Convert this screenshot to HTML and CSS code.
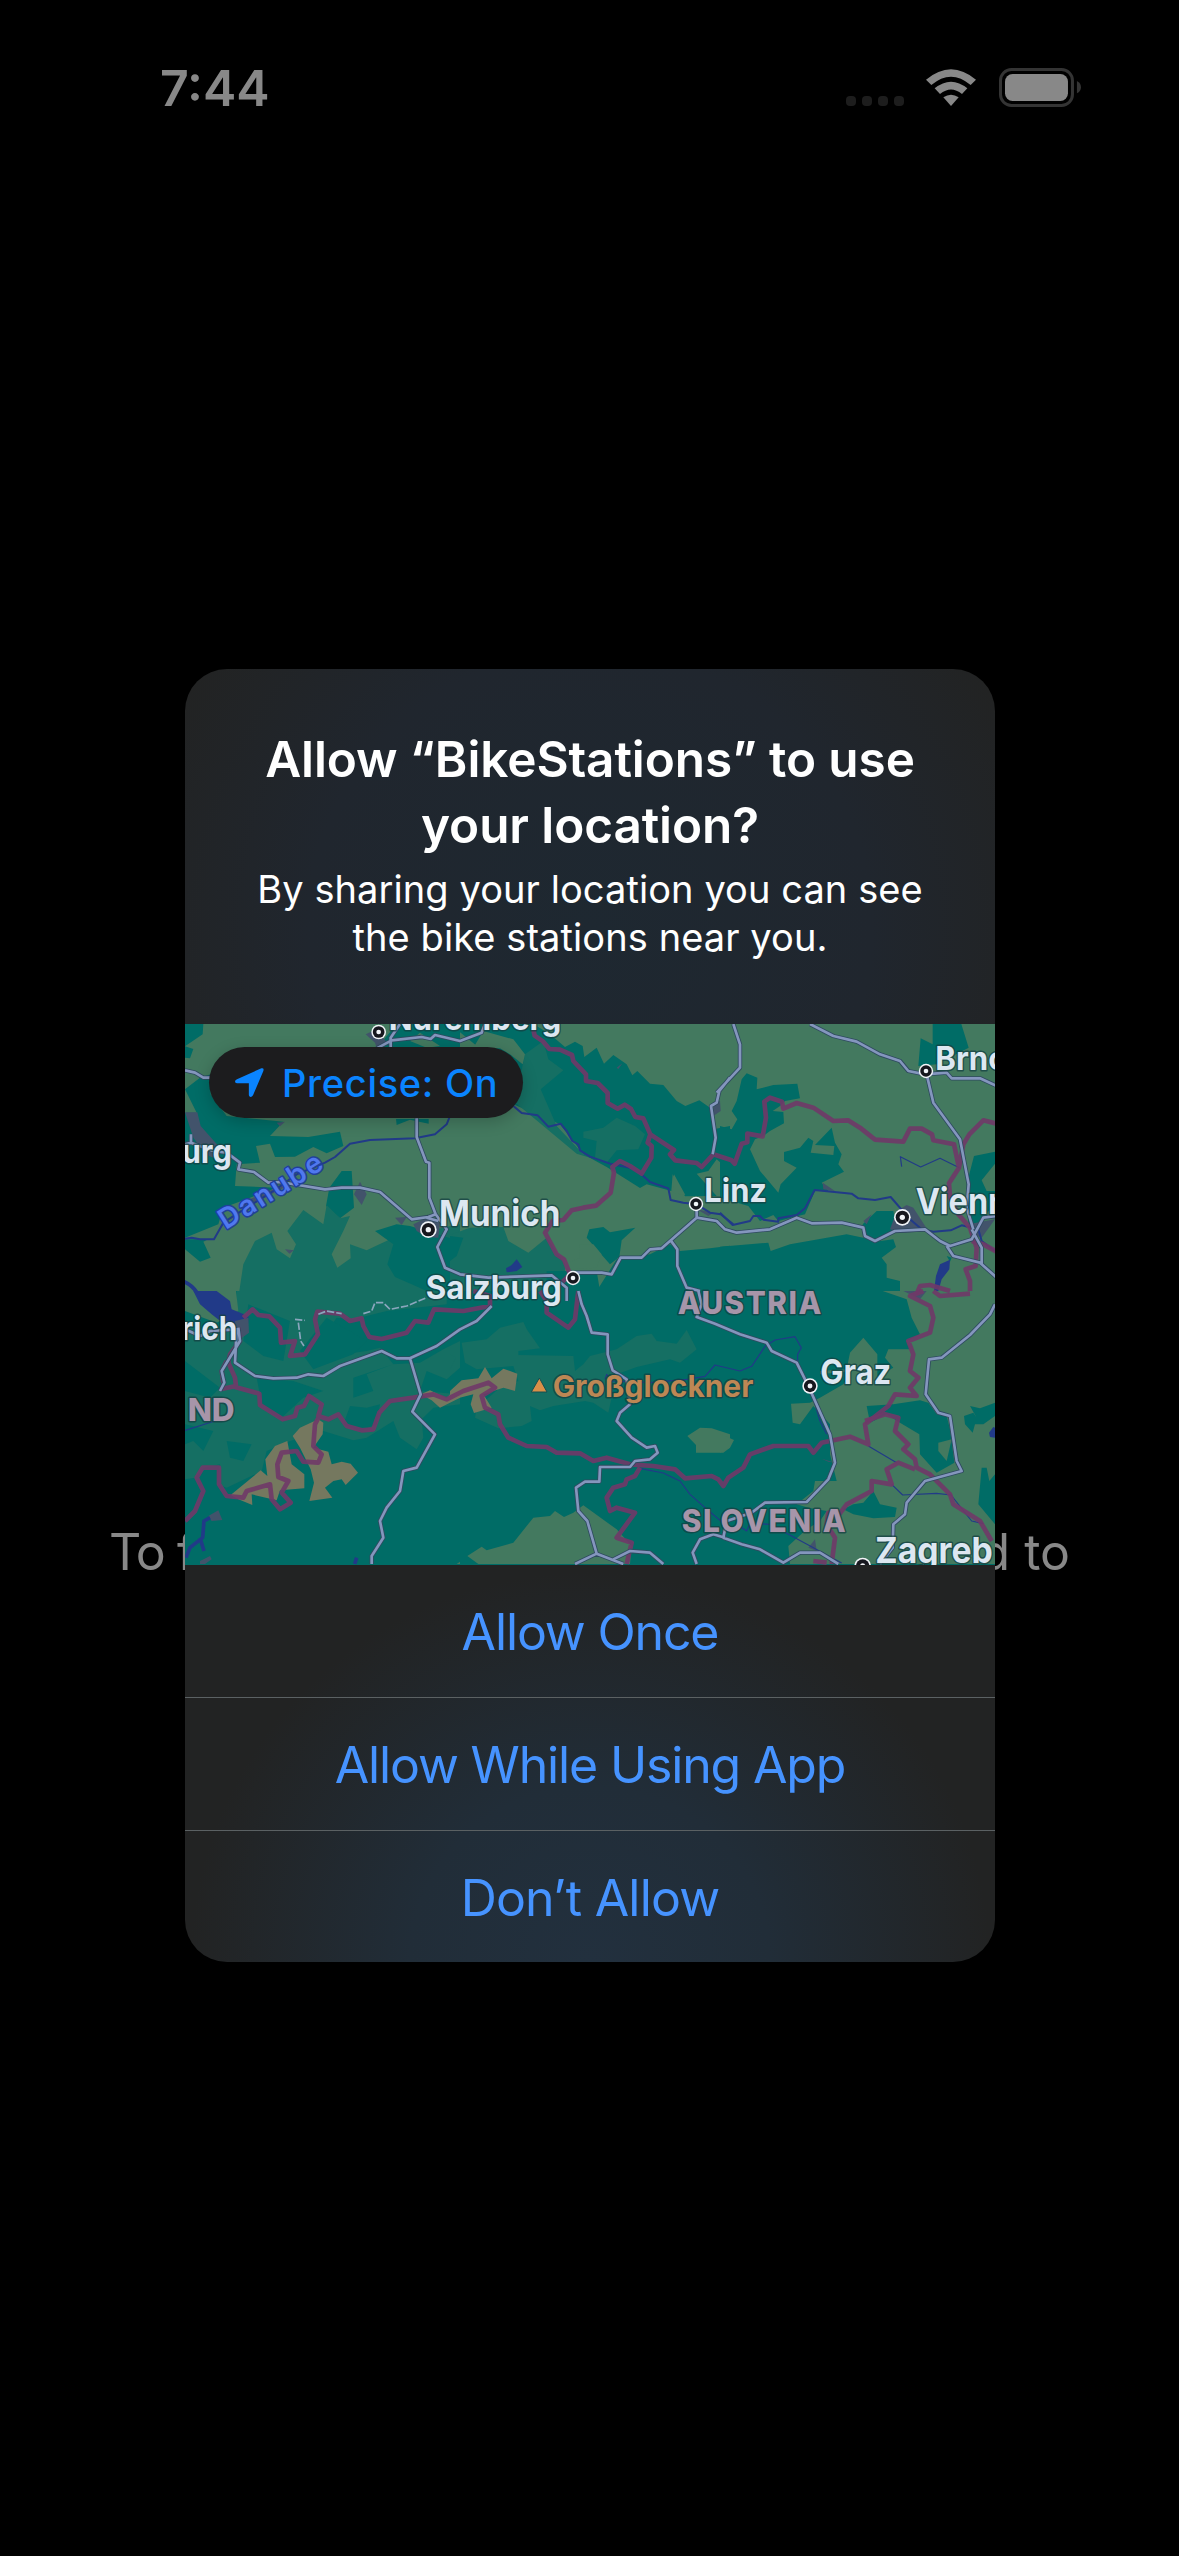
FILE: index.html
```html
<!DOCTYPE html>
<html lang="en">
<head>
<meta charset="utf-8">
<title>BikeStations</title>
<link rel="stylesheet" href="styles.css">
</head>
<body>
<div class="screen">
  <header class="status">
    <time class="clock">7:44</time>
    <div class="indicators">
      <div class="dots"><i></i><i></i><i></i><i></i></div>
      <svg class="wifi" viewBox="0 0 150 111">
        <path d="M0 32Q75 -31 150 32L134 48Q75 -2 16 48Z"/>
        <path d="M26 58Q75 18 124 58L108 75Q75 48 42 75Z"/>
        <path d="M52 85Q75 69 98 85L75 111Z"/>
      </svg>
      <svg class="battery" viewBox="0 0 247 117">
        <rect class="shell" x="4.500" y="4.500" width="216" height="108" rx="33"/>
        <rect class="charge" x="18" y="18" width="189" height="81" rx="23"/>
        <path class="nub" d="M234 39q12 6 12 18.500t-12 18.500z"/>
      </svg>
    </div>
  </header>

  <main class="stage">
    <p class="behind"><span class="start">To f</span><span>d to</span></p>
    <section class="dialog">
      <div class="intro">
        <h1>Allow “BikeStations” to use<br>your location?</h1>
        <p>By sharing your location you can see<br>the bike stations near you.</p>
      </div>

      <div class="map">
        <svg class="canvas" viewBox="0 0 2430 1623" preserveAspectRatio="none">
          <defs>
            <g id="city"><circle r="25" class="c1"/><circle r="20" class="c2"/><circle r="8" class="c1"/></g>
          </defs>
          <rect class="green" width="2430" height="801"/>
          <rect class="teal" y="801" width="2430" height="822"/>

          <!-- land cover -->
          <g transform="translate(-15 -39)">
            <path class="teal" d="M15 39H70L68 70L15 106ZM15 106L40 114L30 142L15 140ZM15 235L60 200L92 190V250L140 315L310 332L270 375L385 378L480 362L490 405L440 427L400 408L345 437L285 438L270 398L228 405L240 455L170 460L165 525L290 530L130 590L115 640L15 680V305L50 305ZM15 685H85L70 692L92 740L60 752L15 715ZM485 480L515 480L522 590L480 622L438 585L448 530ZM650 39H840V230L590 110L610 88ZM648 324H746V338L690 326L650 342Z"/>
            <path class="mid" d="M178 840L190 760L225 690L275 665L290 715L330 742L348 700L322 660L370 597L430 640L440 582L480 622L510 615L490 660L455 730L472 770L512 742L510 700L560 718L640 680L840 640V840Z"/>
            <path class="teal" d="M585 660L650 640L690 645L840 690V840H740L700 822L645 798L622 760L640 700Z"/>
            <path class="urban" d="M15 304H52L62 345L120 410L100 440L75 430L40 380ZM557 70L590 55L625 100L590 110L585 95ZM522 550L540 512L560 550L545 582ZM645 620L680 618L665 642ZM700 640L740 620L780 635L775 680L740 678L710 660ZM290 335L315 332L300 346ZM315 715L342 718L328 728ZM175 580L330 512L320 525L210 585Z"/>
            <path class="green" d="M690 90L720 65L780 105L740 110Z"/>
          </g>
          <g transform="translate(795 -39)">
            <path class="teal" d="M0 39H250L300 70L345 108L375 92L398 105L403 138L440 110L462 158L490 132L530 160L547 193L562 180L600 218L640 222L680 270L706 285L748 268L780 290L790 355L840 345V480L800 445L775 480L740 488L800 555L705 556L668 490L664 540L590 520L570 531L470 468L400 430L330 340L190 280L220 220ZM410 680L418 655L460 648L480 664L556 650L515 688L508 738L480 760L440 715ZM440 840L500 745L600 730L660 700L690 720L780 712L840 704V840Z"/>
            <path class="mid" d="M225 130L280 90L295 145L340 178L272 235L320 345L400 430L435 440L440 390L400 380L400 362L460 350L500 320L555 345L585 370L565 415L500 418L470 455L380 428L190 270L210 200Z"/>
            <path class="green" d="M70 110L100 60L190 85L225 130L218 160L180 130L150 112ZM672 490L706 552L668 545ZM345 760L390 740L388 700L430 700L455 730L440 770L365 775Z"/>
            <path class="mid" d="M0 672L60 650L160 648L175 690L235 725L290 680L345 760V840H0Z"/>
            <path class="teal" d="M0 675L40 680L20 735L0 750ZM290 780L440 780L450 840H290Z"/>
            <path class="water" d="M168 772L185 762L200 745L217 768L200 780L170 784Z"/>
            <path class="urban" d="M790 275L810 270L812 300L790 315ZM740 595L790 605L775 615ZM500 170L517 157L505 174Z"/>
          </g>
          <g transform="translate(1605 -39)">
            <path class="teal" d="M638 39H724L746 110L650 160L595 165L602 82L638 100ZM65 205L80 187L112 200L110 235L160 222L232 218L240 262L195 270L180 285L158 300L190 303L192 337L150 360L130 375L105 385L90 415L120 480L175 545L182 520L230 470L192 450V423L240 410L265 380L280 390L272 425L340 432L343 405L285 402L335 350L345 395L365 430L355 460L372 482L305 515L325 540L285 540L255 610L175 630L160 612L120 630L85 585L0 560V345L35 355L52 325L35 300L50 270ZM762 435L825 422V480L785 508L800 540L825 540V580L770 640L745 640L740 520ZM428 640L470 600L520 600L530 650L465 692L435 670ZM0 707L145 695L152 720L210 700L380 670L430 680L465 692L520 685L528 708L485 740L500 760V800L540 810V840H0ZM680 735L695 740L690 752Z"/>
            <path class="green" d="M785 508L825 458V500Z"/>
            <path class="urban" d="M510 655L530 600L560 582L580 590L625 660L550 665ZM308 515L345 540L310 535ZM745 640L825 625L785 680L760 670ZM430 630L455 610L440 640Z"/>
            <path class="water" d="M660 760L690 746L688 775L665 805L655 840H642L648 795Z"/>
          </g>
          <g transform="translate(-15 801)">
            <path class="mid" d="M170 0H800V40L620 60L520 85L470 80L420 150L420 200L560 180L600 170L640 220L720 215L790 175L840 150V230L800 265L740 240L720 300L840 310V340L760 350L725 385L730 440L710 475L660 440L640 390L560 440L520 448L430 420L330 450L260 480L245 540L140 590L110 580L120 520L70 530L45 560L15 565V110L170 115Z"/>
            <path class="teal" d="M205 40L330 90L310 210L250 195L190 150ZM440 80L560 150L520 190L400 235L360 180ZM15 210L120 290L90 320L15 300ZM230 260L340 270L430 300L370 320L300 385L245 340ZM520 260L640 220L560 250L580 300L520 320ZM15 400L100 420L70 480L40 450L15 460ZM140 450L215 460L190 510L150 500ZM510 345L560 350L600 340L590 400L540 420L490 400Z"/>
            <path class="green" d="M15 0H168L175 60L110 95L15 60ZM830 819L840 812V819Z"/>
            <path class="tan" d="M338 435L360 410L415 385L430 395L428 430L400 470L445 482L455 520L485 512L512 518L534 545L497 582L485 565L460 570L435 590L457 620L388 630L402 575L392 535L360 470ZM152 612L242 538L262 555L256 505L285 465L322 450L335 520L373 550V592L300 598L290 628L215 610L217 642L175 625ZM722 310L750 298L800 322L840 275V320L780 350L755 328Z"/>
            <path class="water" d="M40 0H110L150 30L155 55L205 75V95L170 110L140 105L95 70L60 40Z"/>
            <path class="urban" d="M165 90L205 80L207 125L180 145L165 120ZM85 675L115 658L127 687L95 690ZM60 810L90 795L95 805L75 819H60Z"/>
          </g>
          <g transform="translate(795 801)">
            <path class="mid" d="M35 155L110 145L150 110L220 93L230 115L270 172L205 180L205 192L370 195L375 240L400 220L420 195L500 175L560 135L605 128L620 150L680 158L710 117L740 175L690 215L660 205L560 228L500 250L475 365L430 335L405 330L310 345L270 358L240 345L245 390L215 405L145 412L75 380L80 350L150 290L205 270L190 225L80 235L45 215ZM0 190L18 200L0 235Z"/>
            <path class="tan" d="M0 300L35 268L85 262L105 228L125 262L160 233L202 248L195 300L160 290L100 310L125 350L72 366L62 340L70 310L0 328Z"/>
            <path class="green" d="M52 795L95 767L110 778L190 755L250 680L300 675L315 660L342 678L370 665L400 643L500 715L545 765L540 819H85ZM712 435L750 410L785 412L840 430V470L820 485H738V462Z"/>
          </g>
          <g transform="translate(1605 801)">
            <path class="green" d="M488 0H825V819H210L205 765L260 715L300 690L320 660L265 650L230 640L280 600L285 570L350 570L330 490L330 400L280 345L240 400L218 395L213 338L270 335L300 320L370 280L395 240L300 250L300 240L380 235L390 185L430 140L472 190V255L520 230L495 200L505 175L570 175L560 150L600 130L575 80L560 25ZM0 428L42 447L30 470L0 485Z"/>
            <path class="teal" d="M440 345L520 340L600 328L625 335L650 370L680 375L690 415L703 515L650 545L600 490L598 430L540 395L500 370L450 395ZM732 375L760 365L770 380L750 345L780 352L825 335V375L790 400L765 400L758 425L735 400ZM370 655L400 640L430 635L460 600L480 640L530 650L525 678L460 682L400 670ZM785 530L800 530L808 570L825 550V700L775 640Z"/>
            <path class="green" d="M655 455L695 445L680 510L655 480Z"/>
            <path class="urban" d="M550 0H620L600 25ZM305 503L345 515L325 512ZM265 770L285 745L290 780Z"/>
            <path class="water" d="M807 425L820 408L825 410V440L810 438Z"/>
          </g>

          <!-- rivers -->
          <g class="river">
            <path transform="translate(-15 -39)" d="M15 683L35 680L60 685H102L130 635L200 590L280 540L350 490L435 455L465 438L510 398L570 387L705 382L765 370L800 340L810 315"/>
            <path class="wide" transform="translate(-15 -39)" d="M12 812Q36 822 52 846"/>
            <path transform="translate(795 -39)" d="M190 285L215 306L263 313L295 347L332 338L350 360L367 390L385 400L390 418L420 437L480 458L540 470L572 488L600 513L655 532L662 567L700 575L740 580L780 605L812 610L850 640"/>
            <path transform="translate(1605 -39)" d="M0 605L38 642L90 630L100 615H120L130 626L175 632V622L230 612L255 592L284 537L395 548L415 562L465 567L512 558L570 625L605 655L640 662L692 658L725 643L775 655L785 690L825 720"/>
            <path class="thin" transform="translate(1605 -39)" d="M545 467L541 437L602 468L660 442L718 470"/>
            <path class="wide" transform="translate(-15 801)" d="M90 680L72 690L68 740L30 770L18 800M60 740L72 780M530 800L524 819"/>
            <path class="thin" transform="translate(-15 801)" d="M15 418L105 390"/>
            <path class="thin" transform="translate(795 801)" d="M465 265L470 250L485 270L600 275L710 265L765 256L795 222L870 240L905 226L945 166L975 147L1035 137L1054 170L1043 190V220M568 532L640 546L690 570L720 610L765 650L830 705"/>
            <path class="thin" transform="translate(1605 801)" d="M270 290L300 390L320 430M445 465L530 515M515 580L548 612L650 607L693 612L755 690L790 698M50 700L80 720L90 697L150 700L365 816"/>
          </g>

          <!-- borders -->
          <g class="border">
            <g transform="translate(795 -39)">
              <path d="M250 55L254 74L280 92L298 114L330 116L366 132L370 150L408 190V210L443 216L473 246V276L503 293L524 281L543 294L556 318L580 322L601 370L672 417L660 430L676 448L740 456L755 468L790 430L845 448L854 458L875 398L892 394V368L938 376L948 320L943 272L960 260L996 272L1000 293L1040 276L1090 290L1150 330L1194 328L1230 350L1275 386L1360 392L1380 353L1415 353L1446 370L1450 388L1512 400L1527 470L1497 517L1500 560L1525 610L1560 650L1580 710L1577 765L1547 775L1560 810V840M601 370L593 395L605 405L604 440L575 488L540 465L510 450L487 468L492 485L482 545L438 584L400 590L365 598L340 627L308 630L285 665L320 730L342 745L360 790L330 820M1527 470L1540 400L1558 370L1600 328L1640 338"/>
              <path d="M1565 690L1600 700L1640 722M1400 850L1410 825L1440 822L1500 840"/>
            </g>
            <g transform="translate(-15 801)">
              <path d="M190 80L218 55L235 72L268 76L300 110L303 155L345 150L330 195L375 190L414 130L405 85L412 62L480 68L510 90L545 82L550 105L568 138L605 144L680 125L705 90L745 95L762 55L850 60L930 45V15L880 0M175 110L180 150L150 190L145 215L165 260L168 285L120 295M140 210L125 240L130 275M165 288L238 308L240 342L308 385L345 375L352 350L372 345L387 315L425 340L415 375L445 385L475 370L500 405L545 418L580 415L598 365L630 330L700 320L760 310L800 325L850 300L925 275L945 290L905 315L915 350L955 370L960 400L985 440L1040 465L1100 468L1130 485L1200 487L1240 510L1280 500L1350 520L1420 525L1485 535L1515 562L1595 555L1615 565L1630 585L1645 560L1690 530L1710 490L1780 465L1885 465L1900 485L1925 455L2010 437L2065 460L2055 400L2125 345L2145 310L2210 315L2190 290L2215 260L2190 240L2200 190L2185 150L2250 125L2260 80L2250 45L2190 15L2230 0M418 375L405 400L400 465L425 490L415 515L370 512L350 480L305 485L292 520L295 558L325 570L305 605L332 635L300 655L275 625L270 580L200 600L190 620L140 615L117 580V530H68L50 560L70 600L45 660L15 690M1195 0L1185 85L1165 110L1100 65V30L1080 0"/>
              <path d="M1380 530L1365 555L1340 565L1335 580L1300 590L1280 620L1290 660L1310 650L1365 665L1310 740L1355 755L1340 819M2055 390L2115 370L2155 380L2145 420L2185 460L2170 475L2205 505L2210 530L2250 550L2310 610L2320 640L2400 690L2435 750M2205 535L2155 515L2120 535L2135 580L2075 570L2075 600L2000 640L1970 680L1965 660L1945 665L1940 700L1965 740L1955 819M1900 810L1940 815M2260 0L2280 15L2370 8"/>
            </g>
          </g>

          <!-- roads, drawn as a dark casing with a lighter core -->
          <defs>
            <g id="roads">
              <path transform="translate(-15 -39)" d="M15 178L45 185L70 200H92M590 112L635 88L725 78L752 84L765 72L840 90L905 65L915 39M632 110V80L660 39M710 322V378L738 452L748 455V560L767 610L745 618L695 625L600 543L540 530H485L435 535L300 513L265 515L222 483L175 475L180 455L140 425L100 420L33 395L15 400M33 395V370M767 610L800 655L772 708L795 770L840 790L925 800L1115 793L1160 830L1160 870M775 630L740 620"/>
              <path transform="translate(795 -39)" d="M363 785H455L485 790L512 740H575L600 715L635 712L740 620L800 630L825 655L860 665L960 655L1040 620L1085 637L1175 635L1240 650L1245 675L1275 690L1335 660L1425 655L1470 690L1500 705L1565 685L1600 620L1640 615M740 580V620M662 688L682 715V765L710 830L750 840M1490 705L1510 735L1590 755L1640 800M1565 655L1595 710V760M840 200L808 240L800 275L783 285L797 380L788 430M850 39L870 100V170L800 245M1080 39L1150 75L1220 92L1290 130L1350 150L1375 180L1425 190L1490 185L1505 202H1590L1640 225M1430 190L1450 275L1530 385L1556 520L1550 590L1570 655"/>
              <path transform="translate(-15 801)" d="M120 300L133 275L125 240L180 150L175 110M15 115L60 135L90 120L170 115L165 215L225 255L280 262L350 260L385 250L430 255L480 225L605 180L650 202H690L770 165L840 115L890 90L935 45M690 202L722 310L697 362L765 430L710 530L670 540L660 600L620 650L600 690L610 740L575 795V819"/>
              <path transform="translate(795 801)" d="M385 0L395 40L410 75L425 125L473 130V190L488 238L530 265L540 340L510 365L500 390L545 440L590 470L615 465L623 485L600 505L555 510L540 528L450 528L448 572H405L378 590L385 660L412 690L440 788L375 819M440 788L520 819M490 805L540 780L600 785L640 819M745 0L755 40L740 78L795 98L870 130L950 155L965 180L1040 215L1055 245L1075 285L1140 430L1155 515L1135 565L1070 633L945 635L905 665L830 690L820 740L875 760L930 775L1000 815L1050 785H1110L1165 819M740 819L728 785L750 745L790 730L825 740"/>
              <path transform="translate(1605 801)" d="M825 40L810 70L750 132L665 200L627 205L617 310L655 365L690 375L710 510L725 540L615 570L560 635L555 670L520 700L518 770L480 819"/>
            </g>
          </defs>
          <use href="#roads" class="casing"/>
          <use href="#roads" class="core"/>
          <path class="dashed" transform="translate(-15 801)" d="M345 85L375 88M355 95L362 150L372 165M415 70L440 60L485 68M550 68L575 60L585 35L610 35L630 55L680 45L740 20"/>

          <use href="#city" transform="translate(581 24) scale(.88)"/>
          <use href="#city" x="730" y="617"/>
          <use href="#city" transform="translate(1533 540) scale(.86)"/>
          <use href="#city" transform="translate(1164 762) scale(.86)"/>
          <use href="#city" transform="translate(2223 141) scale(.86)"/>
          <use href="#city" x="2152" y="580"/>
          <use href="#city" transform="translate(1875 1086) scale(.92)"/>
          <use href="#city" x="2033" y="1626"/>

          <g class="label">
            <text x="611" y="17" font-size="101" textLength="518" lengthAdjust="spacingAndGlyphs">Nuremberg</text>
            <text x="762" y="606" font-size="108" textLength="364" lengthAdjust="spacingAndGlyphs">Munich</text>
            <text x="1558" y="535" font-size="100" textLength="188" lengthAdjust="spacingAndGlyphs">Linz</text>
            <text x="2192" y="570" font-size="108" textLength="334" lengthAdjust="spacingAndGlyphs">Vienna</text>
            <text x="2251" y="137" font-size="100" textLength="216" lengthAdjust="spacingAndGlyphs">Brno</text>
            <text x="722" y="824" font-size="97" textLength="408" lengthAdjust="spacingAndGlyphs">Salzburg</text>
            <text x="1906" y="1080" font-size="101" textLength="213" lengthAdjust="spacingAndGlyphs">Graz</text>
            <text x="2071" y="1617" font-size="107" textLength="352" lengthAdjust="spacingAndGlyphs">Zagreb</text>
            <text x="-10" y="417" font-size="100" textLength="151" lengthAdjust="spacingAndGlyphs">urg</text>
            <text x="-12" y="948" font-size="97" textLength="169" lengthAdjust="spacingAndGlyphs">rich</text>
          </g>
          <g class="label country">
            <text x="8" y="1190" font-size="93" textLength="141" lengthAdjust="spacingAndGlyphs">ND</text>
            <text x="1478" y="869" font-size="94" textLength="436" letter-spacing="5" lengthAdjust="spacingAndGlyphs">AUSTRIA</text>
            <text x="1490" y="1523" font-size="94" textLength="497" letter-spacing="5" lengthAdjust="spacingAndGlyphs">SLOVENIA</text>
          </g>
          <path class="peak-mark" d="M1063 1062L1086 1104H1039Z"/>
          <text class="label peak" x="1103" y="1119" font-size="91" textLength="602" lengthAdjust="spacingAndGlyphs">Großglockner</text>
          <text class="label stream" transform="translate(122 618) rotate(-32)" font-size="84" textLength="352">Danube</text>
        </svg>
        <div class="precise">
          <svg viewBox="0 0 88 88"><path d="M80 1Q89 -1 86 9L55 82Q52 88 47 88Q42 87 42 82V46H6Q0 46 0 41Q0 37 6 34Z"/></svg>
          <span>Precise: On</span>
        </div>
      </div>

      <div class="actions">
        <button>Allow Once</button>
        <button>Allow While Using App</button>
        <button class="deny">Don’t Allow</button>
      </div>
    </section>
  </main>
</div>
</body>
</html>
```
FILE: styles.css
```css
* { box-sizing: border-box; }
body { margin: 0; background: #000; font-family: Inter, "Liberation Sans", sans-serif; }
.screen { width: 1179px; height: 2556px; overflow: hidden; background: #000; display: flex; flex-direction: column; }

.status { height: 669px; padding: 58px 98px 0 160px; display: flex; justify-content: space-between; align-items: flex-start; color: #888; }
.clock { font-size: 50px; line-height: 60px; font-weight: 600; letter-spacing: 0; }
.indicators { display: flex; align-items: flex-start; padding-top: 10px; }
.dots { display: flex; gap: 6px; margin: 28px 22px 0 0; }
.dots i { width: 10px; height: 10px; border-radius: 4px; background: #1d1d1d; }
.wifi { width: 50px; height: 37px; margin: 1px 23px 0 0; fill: #888; }
.battery { width: 82.300px; height: 39px; }
.shell { fill: none; stroke: #343434; stroke-width: 9; }
.charge { fill: #888; }
.nub { fill: #343434; }

.stage { position: relative; display: flex; justify-content: center; }
.behind { position: absolute; left: 109px; right: 109px; top: 853px; margin: 0; display: flex; justify-content: space-between; color: #888; font-size: 50px; line-height: 60px; }
.start { letter-spacing: -1.500px; }

.dialog {
  position: relative; left: .5px; width: 810px; height: 1293px; border-radius: 42px; overflow: hidden;
  display: flex; flex-direction: column; color: #fff;
  background:
    radial-gradient(ellipse 400px 390px at 50% 100%, #22303e 0%, #212d38 45%, rgba(34, 34, 35, 0) 100%),
    radial-gradient(ellipse 470px 460px at 50% 20%, #1e2831 0%, #20262e 60%, rgba(34, 34, 34, 0) 100%),
    #222323;
}
.intro { height: 355px; padding-top: 57px; text-align: center; white-space: nowrap; }
.intro h1 { margin: 0; font-size: 49.500px; line-height: 66px; font-weight: 600; letter-spacing: -.1px; }
.intro p { margin: 7px 0 0; font-size: 38px; line-height: 48px; letter-spacing: .08px; }

.map { position: relative; height: 541px; border-bottom: 1px solid #5b6462; }
.canvas { display: block; width: 810px; height: 541px; }
.green { fill: #43795f; }
.teal { fill: #006c66; }
.mid { fill: #156f63; }
.tan { fill: #75785f; }
.urban { fill: #42536b; }
.water { fill: #213a88; }
.river { fill: none; stroke: #213a88; stroke-width: 6; stroke-linejoin: round; }
.river .thin { stroke-width: 3.500; }
.river .wide { stroke-width: 11; }
.border { fill: none; stroke: #703868; stroke-opacity: .9; stroke-width: 14; stroke-linejoin: round; }
.casing, .core, .dashed { fill: none; stroke-linejoin: round; }
.casing { stroke: #2f4a60; stroke-width: 13; }
.core { stroke: #8496bd; stroke-width: 8; }
.dashed { stroke: #8aa6bd; stroke-width: 5; stroke-dasharray: 22 6; }
.c1 { fill: #f1f4f8; }
.c2 { fill: #16171e; }
.label { fill: #dde7f1; font-weight: 700; paint-order: stroke; stroke: rgba(20, 64, 66, .75); stroke-width: 9; stroke-linejoin: round; }
.country { fill: #a795a9; font-weight: 800; }
.peak { fill: #bd8754; }
.peak-mark { fill: #d88f48; stroke: #154f50; stroke-width: 3; }
.stream { fill: #5078ee; stroke: #21409a; font-weight: 600; }

.precise {
  position: absolute; left: 24px; top: 23px; width: 314px; height: 71px; border-radius: 36px; padding-left: 26px;
  display: flex; align-items: center; gap: 18px; background: #1c1c1e; color: #0a84ff;
  font-size: 38px; font-weight: 500; letter-spacing: .7px; white-space: nowrap; box-shadow: 0 4px 16px rgba(0, 0, 0, .2);
}
.precise svg { width: 29px; height: 29px; fill: #0a84ff; }

.actions { display: flex; flex-direction: column; }
.actions button { height: 133px; padding: 2px 0 0; border: 0; border-bottom: 1px solid #5b6163; background: none; color: #4693ff; font: 400 50px/130px Inter, sans-serif; letter-spacing: -1.150px; }
.actions .deny { height: 131px; border-bottom: 0; letter-spacing: -.8px; }
```
